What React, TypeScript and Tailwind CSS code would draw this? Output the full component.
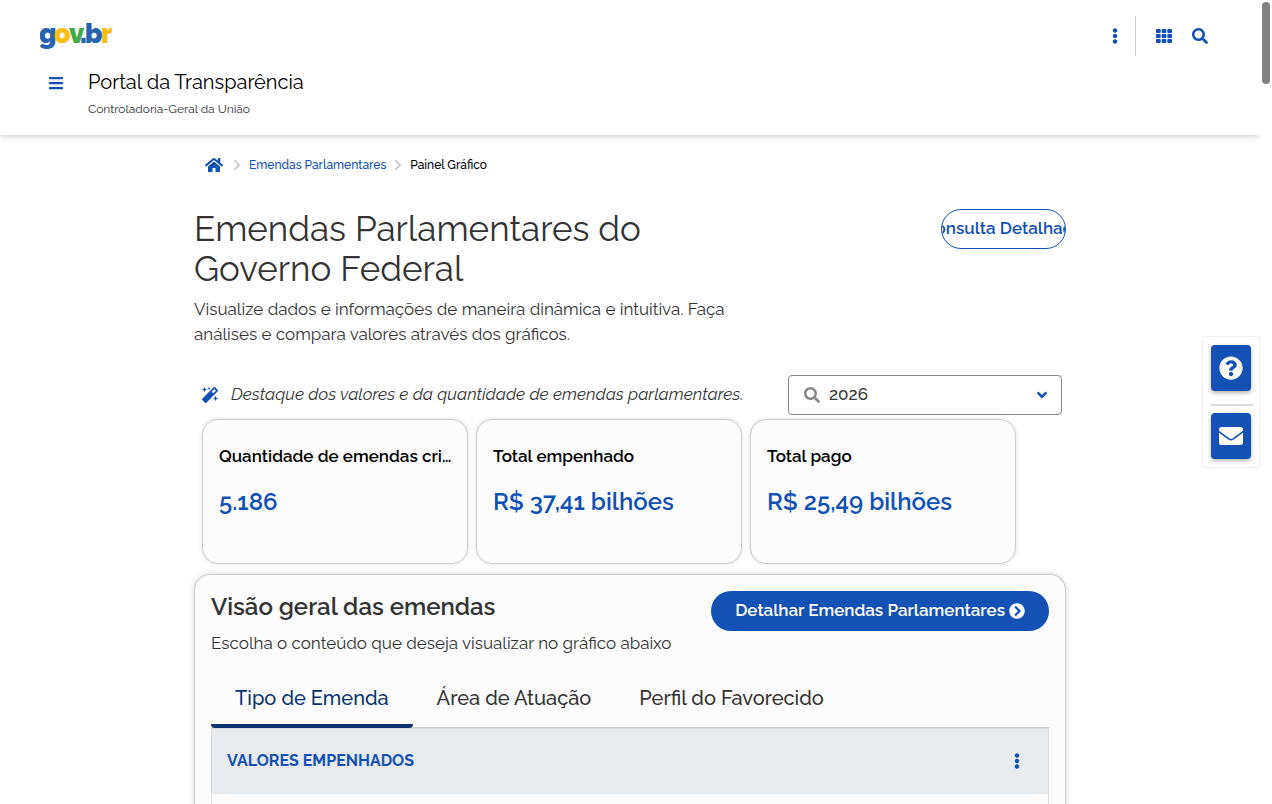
import React, { useState } from "react";
import clsx from "clsx";
import {
  FaAngleDown,
  FaBars,
  FaChevronCircleRight,
  FaChevronRight,
  FaEllipsisV,
  FaEnvelope,
  FaHome,
  FaMagic,
  FaQuestionCircle,
  FaSearch,
  FaTh,
} from "react-icons/fa";

const cards = [
  { title: "Quantidade de emendas criadas", value: "5.186" },
  { title: "Total empenhado", value: "R$ 37,41 bilhões" },
  { title: "Total pago", value: "R$ 25,49 bilhões" },
];

const tabs = ["Tipo de Emenda", "Área de Atuação", "Perfil do Favorecido"];

const years = ["2026", "2025", "2024", "2023"];

const Logo: React.FC = () => (
  <svg width="76" height="40" viewBox="0 0 76 40" role="img" aria-label="gov.br" fontSize="27" fontWeight="900">
    <text y="27">
      <tspan x="-1" fill="#2864ae">g</tspan>
      <tspan x="14" fill="#fdbe11">o</tspan>
      <tspan x="29" fill="#45a849">v</tspan>
      <tspan x="40" fill="#2864ae">.</tspan>
      <tspan x="45" fill="#2864ae">b</tspan>
      <tspan x="61" fill="#fdbe11">r</tspan>
    </text>
  </svg>
);

const Header: React.FC = () => (
  <header className="relative px-10 pt-4 pb-4 bg-white shadow-[0_1px_6px_rgba(51,51,51,0.25)]">
    <div className="flex items-center justify-between h-10">
      <a href="#govbr">
        <Logo />
      </a>
      <div className="flex items-center text-[#1351b4]">
        <button className="w-10 h-10 flex items-center justify-center" aria-label="Links de acesso">
          <FaEllipsisV className="w-4 h-4" />
        </button>
        <div className="h-10 border-l border-[#ccc] mr-3" />
        <button className="w-8 h-10 flex items-center justify-center" aria-label="Sistemas">
          <FaTh className="w-4 h-4" />
        </button>
        <button className="w-10 h-10 flex items-center justify-center" aria-label="Pesquisar">
          <FaSearch className="w-4 h-4" />
        </button>
      </div>
    </div>
    <div className="flex items-start gap-4 mt-2">
      <button className="w-8 h-[38px] flex items-center justify-center text-[#1351b4]" aria-label="Menu">
        <FaBars className="w-4 h-4" />
      </button>
      <div>
        <div className="text-xl leading-9 text-black">Portal da Transparência</div>
        <div className="text-xs leading-[19px] text-[#333]">Controladoria-Geral da União</div>
      </div>
    </div>
  </header>
);

const Breadcrumb: React.FC = () => (
  <nav className="flex items-center h-6 pl-[11px] text-xs font-medium" aria-label="Você está aqui">
    <a href="#inicio" className="text-[#1351b4]" aria-label="Página inicial">
      <FaHome className="w-[18px] h-[18px]" />
    </a>
    <FaChevronRight className="w-3 h-3 ml-2 mr-[6px] text-[#ccc]" />
    <a href="#emendas" className="text-[#1351b4]">Emendas Parlamentares</a>
    <FaChevronRight className="w-3 h-3 mx-[6px] text-[#ccc]" />
    <span className="text-black">Painel Gráfico</span>
  </nav>
);

const SideActions: React.FC = () => (
  <div className="absolute right-0 top-[336px] flex flex-col p-2 pr-[6px] bg-white border border-[#f0f0f0] rounded-l">
    <button
      className="w-10 h-[46px] flex items-center justify-center rounded-sm bg-[#1351b4] text-white shadow-[0_2px_4px_rgba(0,0,0,0.3)]"
      aria-label="Ajuda"
    >
      <FaQuestionCircle className="w-6 h-6" />
    </button>
    <div className="w-[42px] h-[2px] mt-[13px] mb-[7px] bg-[#ddd]" />
    <button
      className="w-10 h-[46px] flex items-center justify-center rounded-sm bg-[#1351b4] text-white shadow-[0_2px_4px_rgba(0,0,0,0.3)]"
      aria-label="Fale conosco"
    >
      <FaEnvelope className="w-6 h-6" />
    </button>
  </div>
);

const Overview: React.FC = () => {
  const [active, setActive] = useState(tabs[0]);

  return (
    <section className="mt-[10px] px-4 pt-4 rounded-t-2xl border border-b-0 border-[#ccc] bg-[#fcfcfc] shadow-[0_0_6px_rgba(0,0,0,0.16)]">
      <div className="flex items-start justify-between">
        <div>
          <h2 className="text-2xl leading-8 font-semibold text-[#333]">Visão geral das emendas</h2>
          <p className="mt-2 text-[17px] leading-6 text-[#333]">Escolha o conteúdo que deseja visualizar no gráfico abaixo</p>
        </div>
        <button className="flex items-center gap-1 h-10 px-6 rounded-full bg-[#1351b4] text-[17px] font-semibold text-white whitespace-nowrap">
          Detalhar Emendas Parlamentares
          <FaChevronCircleRight className="w-4 h-4" />
        </button>
      </div>

      <div className="flex mt-3 border-b border-[#ccc]" role="tablist">
        {tabs.map((tab) => (
          <button
            key={tab}
            role="tab"
            aria-selected={tab === active}
            onClick={() => setActive(tab)}
            className={clsx(
              "h-[61px] px-6 pt-1 -mb-px text-xl font-medium border-b-4 rounded-b-sm",
              tab === active ? "border-[#0c326f] text-[#0c326f]" : "border-transparent text-[#333]"
            )}
          >
            {tab}
          </button>
        ))}
      </div>

      <div className="h-96 border border-[#ddd]">
        <div className="flex items-center justify-between h-[65px] px-[15px] pb-[2px] bg-[#e7ebee] text-[#1351b4]">
          <h3 className="text-base font-bold">VALORES EMPENHADOS</h3>
          <button className="w-8 h-8 flex items-center justify-center" aria-label="Opções">
            <FaEllipsisV className="w-4 h-4" />
          </button>
        </div>
      </div>
    </section>
  );
};

const App: React.FC = () => {
  const [year, setYear] = useState(years[0]);

  return (
    <div className="flex h-screen overflow-hidden bg-white font-[Raleway,'Open_Sans',sans-serif]">
      <div className="relative flex-1 min-w-0 overflow-hidden">
        <Header />
        <main className="max-w-[872px] mx-auto pt-[18px]">
          <Breadcrumb />

          <div className="flex items-start justify-between mt-8">
            <div className="max-w-[560px]">
              <h1 className="text-[35px] leading-10 text-[#333]">
                Emendas Parlamentares do Governo Federal
              </h1>
              <p className="mt-2 text-[17px] leading-[25px] text-[#333]">
                Visualize dados e informações de maneira dinâmica e intuitiva. Faça análises e compara valores através dos gráficos.
              </p>
            </div>
            <button className="flex items-center justify-center w-[125px] h-10 overflow-hidden rounded-full border border-[#1351b4] text-[17px] font-semibold text-[#1351b4] whitespace-nowrap">
              Consulta Detalhada
            </button>
          </div>

          <div className="flex items-center justify-between mt-7 pl-2 pr-1">
            <p className="flex items-center gap-[13px] text-[17px] italic text-[#333]">
              <FaMagic className="w-4 h-4 text-[#1351b4]" />
              Destaque dos valores e da quantidade de emendas parlamentares.
            </p>
            <label className="flex items-center w-[274px] h-10 px-[15px] rounded-[4px] border border-[#888] text-[#888]">
              <FaSearch className="w-4 h-4" />
              <span className="sr-only">Ano</span>
              <select
                value={year}
                onChange={(e) => setYear(e.target.value)}
                className="flex-1 pl-[9px] appearance-none bg-transparent text-[17px] font-medium text-[#333] outline-none"
              >
                {years.map((y) => (
                  <option key={y}>{y}</option>
                ))}
              </select>
              <FaAngleDown className="w-4 h-4 -mr-1 text-[#1351b4]" />
            </label>
          </div>

          <div className="flex gap-2 mt-1 pl-2">
            {cards.map((card) => (
              <div
                key={card.title}
                className="w-[266px] h-[145px] pl-4 pr-3 pt-6 rounded-2xl border border-[#ccc] bg-[#fcfcfc] shadow-[0_0_5px_rgba(0,0,0,0.12)]"
              >
                <div className="text-[17px] leading-6 font-semibold text-black truncate">{card.title}</div>
                <div className="mt-[18px] text-2xl leading-8 font-semibold text-[#1351b4]">{card.value}</div>
              </div>
            ))}
          </div>

          <Overview />
        </main>
        <SideActions />
      </div>
      <div className="w-3 pt-[2px] pl-[2px] shrink-0">
        <div className="w-2 h-[82px] rounded-full bg-[#808080]" />
      </div>
    </div>
  );
};

export default App;
